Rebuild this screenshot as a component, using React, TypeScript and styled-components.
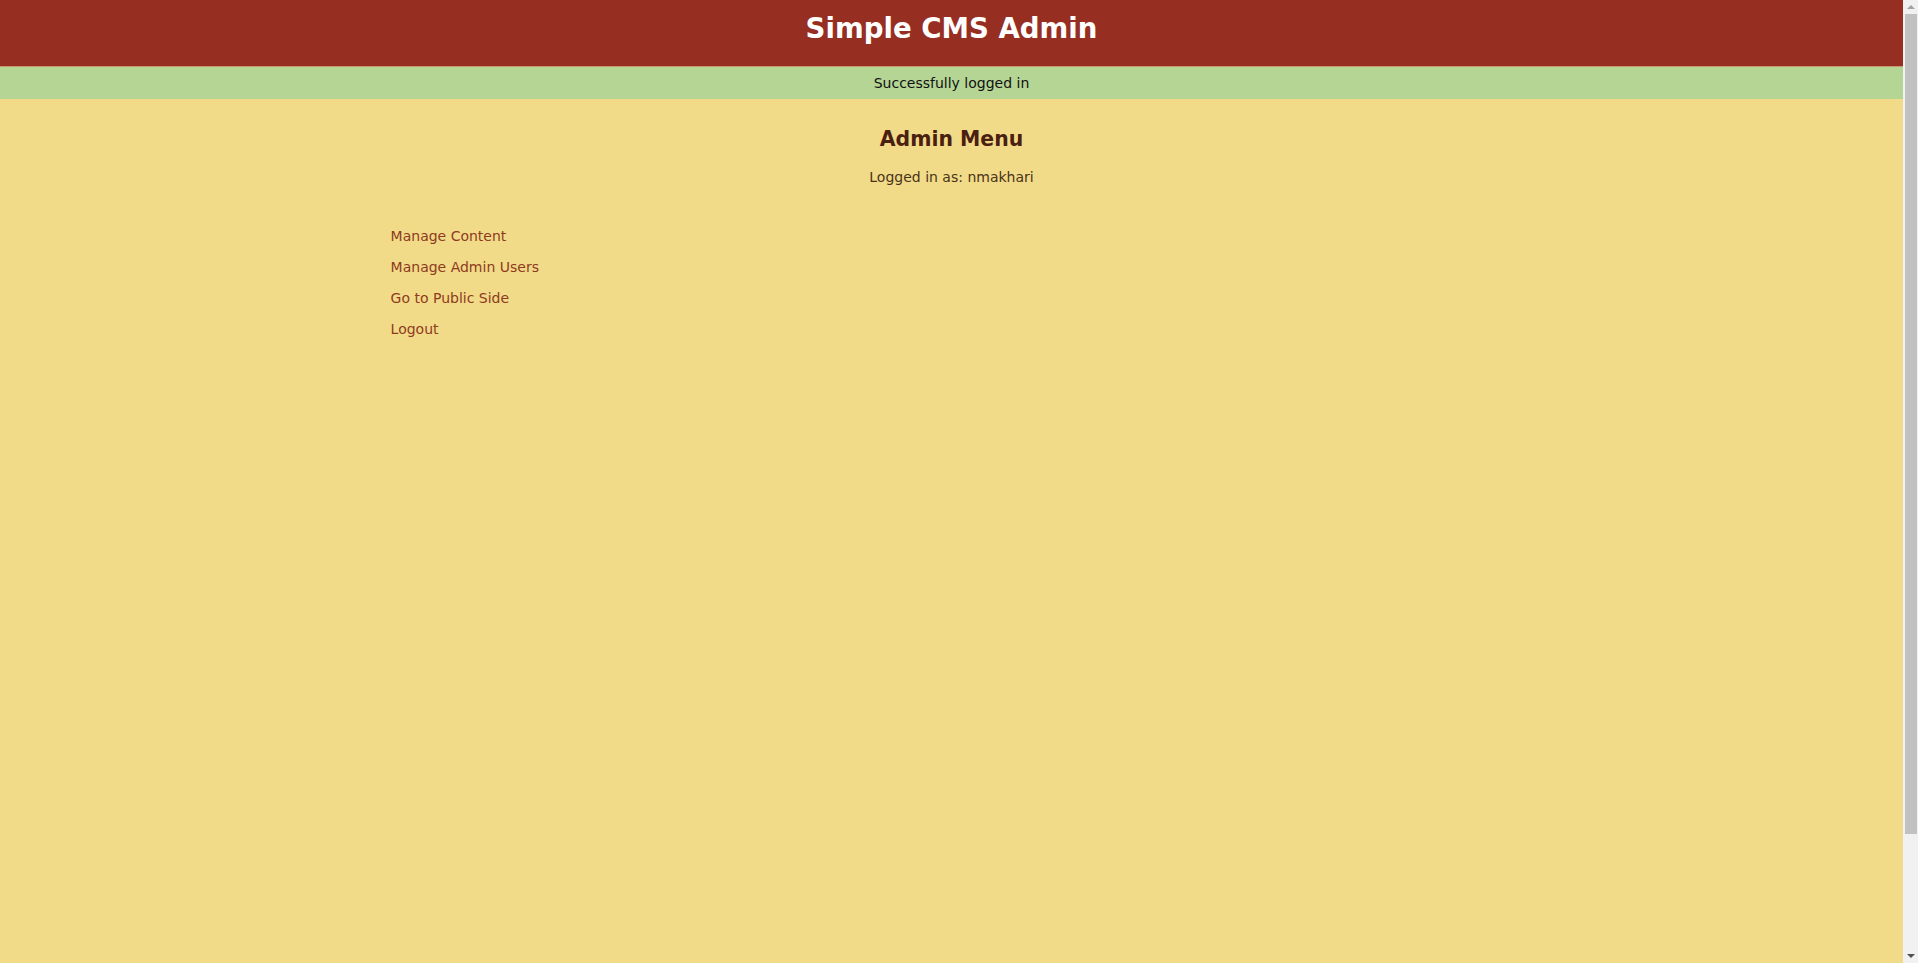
import React from "react";
import styled, { createGlobalStyle } from "styled-components";

const Global = createGlobalStyle`
  html, body { margin: 0; padding: 0; }
  body {
    background: #f1db88;
    font-family: "DejaVu Sans", Verdana, sans-serif;
    font-size: 14px;
    color: #4a3318;
    overflow: hidden;
  }
`;

const Page = styled.div`
  min-height: 100vh;
  margin-right: 15px;
  background: #f1db88;
  display: flex;
  flex-direction: column;
`;

const Header = styled.header`
  height: 66px;
  background: #962e22;
  border-bottom: 1px solid #c99a6e;
  display: flex;
  justify-content: center;
  align-items: flex-start;
`;

const Title = styled.h1`
  margin: 0;
  padding-top: 12px;
  font-size: 27.6px;
  line-height: 34px;
  font-weight: bold;
  color: #ffffff;
`;

const Flash = styled.div`
  height: 32px;
  background: #b5d595;
  color: #111;
  display: flex;
  justify-content: center;
  align-items: center;
  font-size: 14px;
`;

const Main = styled.main`
  width: 60%;
  margin: 0 auto;
  display: flex;
  flex-direction: column;
`;

const Heading = styled.h2`
  margin: 28px 0 0;
  text-align: center;
  font-size: 20.4px;
  line-height: 24px;
  font-weight: bold;
  color: #4a2010;
`;

const Who = styled.p`
  margin: 18px 0 0;
  text-align: center;
  font-size: 14px;
  line-height: 16px;
  color: #4a3318;
`;

const Menu = styled.ul`
  list-style: none;
  margin: 43px 0 0;
  padding: 0 0 0 10px;
  display: flex;
  flex-direction: column;
  gap: 15px;
`;

const Item = styled.li`
  font-size: 14px;
  line-height: 16px;
`;

const Link = styled.a`
  color: #8e3a1e;
  text-decoration: none;
`;

const Scrollbar = styled.div`
  position: fixed;
  top: 0;
  right: 0;
  bottom: 0;
  width: 15px;
  background: #f1f1f1;
  display: flex;
  flex-direction: column;
  align-items: center;
`;

const Arrow = styled.div<{ $down?: boolean }>`
  height: 14px;
  width: 15px;
  display: flex;
  align-items: center;
  justify-content: center;
  &::after {
    content: "";
    width: 0;
    height: 0;
    border-left: 4px solid transparent;
    border-right: 4px solid transparent;
    ${(p) =>
      p.$down
        ? "border-top: 4px solid #505050;"
        : "border-bottom: 4px solid #a3a3a3;"}
  }
`;

const Track = styled.div`
  flex: 1;
  width: 100%;
  display: flex;
  justify-content: center;
`;

const Thumb = styled.div`
  width: 12px;
  margin-left: 1px;
  height: 820px;
  background: #c1c1c1;
`;

const links = ["Manage Content", "Manage Admin Users", "Go to Public Side", "Logout"];

export default function App() {
  return (
    <>
      <Global />
      <Page>
        <Header>
          <Title>Simple CMS Admin</Title>
        </Header>
        <Flash>Successfully logged in</Flash>
        <Main>
          <Heading>Admin Menu</Heading>
          <Who>Logged in as: nmakhari</Who>
          <Menu>
            {links.map((l) => (
              <Item key={l}>
                <Link href="#">{l}</Link>
              </Item>
            ))}
          </Menu>
        </Main>
      </Page>
      <Scrollbar>
        <Arrow />
        <Track>
          <Thumb />
        </Track>
        <Arrow $down />
      </Scrollbar>
    </>
  );
}
